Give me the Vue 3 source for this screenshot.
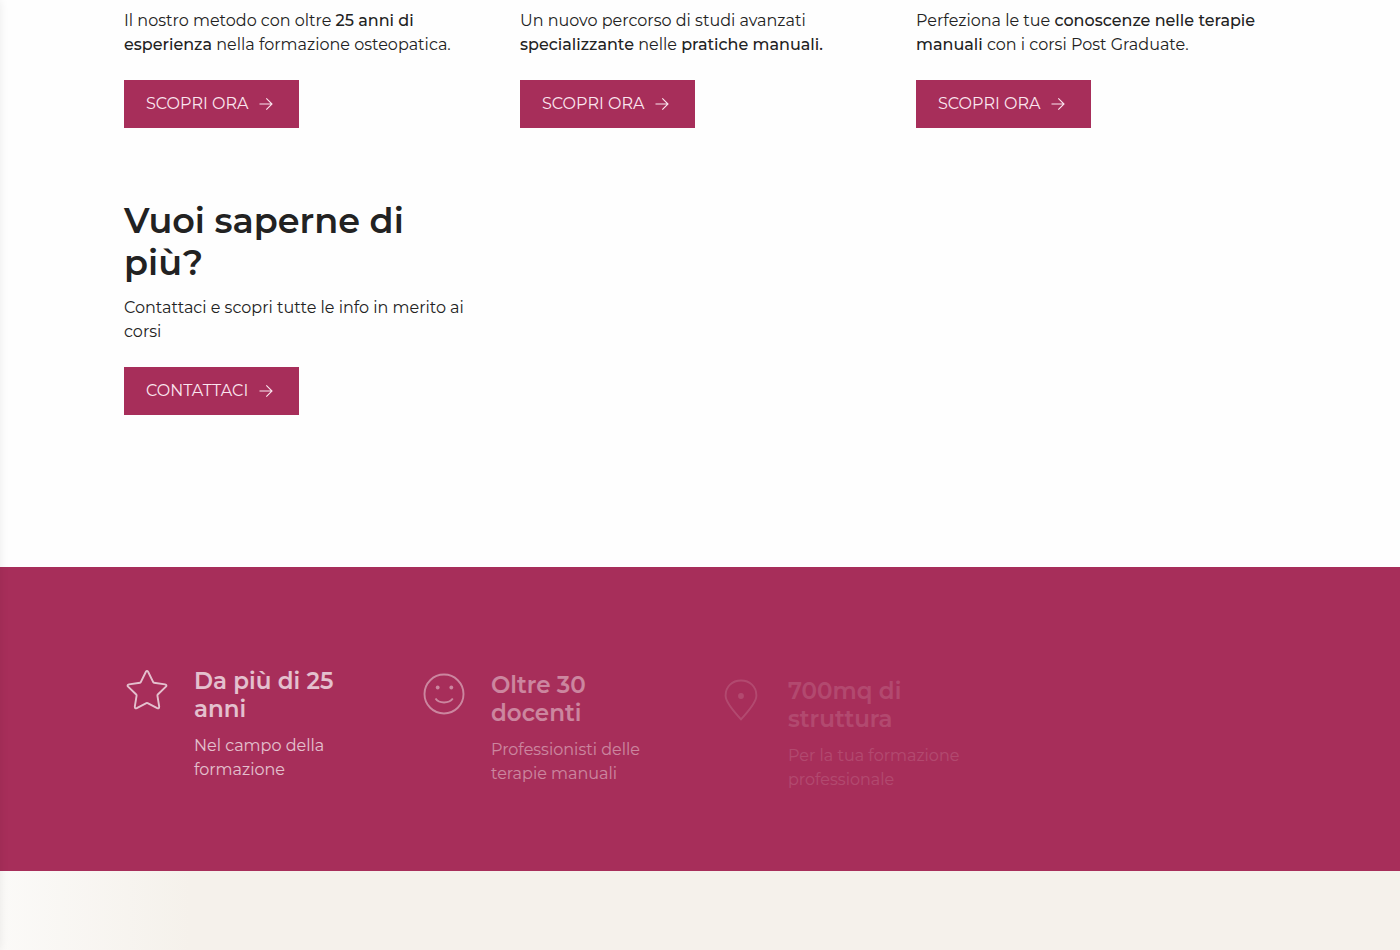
<script setup>
const courses = [
  { parts: [{ t: 'Il nostro metodo con oltre ' }, { t: '25 anni di', b: true, br: true }, { t: 'esperienza', b: true }, { t: ' nella formazione osteopatica.' }] },
  { parts: [{ t: 'Un nuovo percorso di studi avanzati', br: true }, { t: 'specializzante', b: true }, { t: ' nelle ' }, { t: 'pratiche manuali.', b: true }] },
  { parts: [{ t: 'Perfeziona le tue ' }, { t: 'conoscenze nelle terapie', b: true, br: true }, { t: 'manuali', b: true }, { t: ' con i corsi Post Graduate.' }] }
]

const features = [
  { icon: 'star', title: ['Da più di 25', 'anni'], text: ['Nel campo della', 'formazione'], opacity: 0.7, rise: 0 },
  { icon: 'smile', title: ['Oltre 30', 'docenti'], text: ['Professionisti delle', 'terapie manuali'], opacity: 0.42, rise: 4 },
  { icon: 'pin', title: ['700mq di', 'struttura'], text: ['Per la tua formazione', 'professionale'], opacity: 0.13, rise: 10 }
]
</script>

<template>
  <main class="page">
    <section class="courses">
      <div class="container course-grid">
        <article v-for="(course, i) in courses" :key="i" class="course">
          <p>
            <template v-for="(part, j) in course.parts" :key="j"><strong v-if="part.b">{{ part.t }}</strong><span v-else>{{ part.t }}</span><br v-if="part.br"></template>
          </p>
          <a class="button" href="#">
            SCOPRI ORA
            <svg class="arrow" viewBox="0 0 14 14" aria-hidden="true"><path d="M.5 7h12.4M7.3 1.3 13 7l-5.7 5.7" /></svg>
          </a>
        </article>
        <article class="course contact">
          <h2>Vuoi saperne di<br>più?</h2>
          <p>Contattaci e scopri tutte le info in merito ai<br>corsi</p>
          <a class="button" href="#">
            CONTATTACI
            <svg class="arrow" viewBox="0 0 14 14" aria-hidden="true"><path d="M.5 7h12.4M7.3 1.3 13 7l-5.7 5.7" /></svg>
          </a>
        </article>
      </div>
    </section>

    <section class="band">
      <div class="container feature-grid">
        <article
          v-for="f in features"
          :key="f.icon"
          class="feature"
          :style="{ opacity: f.opacity, transform: `translateY(${f.rise}px)` }"
        >
          <svg class="icon" viewBox="0 0 46 46" aria-hidden="true">
            <path v-if="f.icon === 'star'" d="M21.9 4.8Q23 2.9 24.1 4.8L29.2 15.2Q29.4 15.7 30 15.8L41 17.4Q43.4 18 41.9 19.6L33.8 27.5Q33.3 28 33.4 28.6L35.2 39.6Q35.2 42 33.2 41.2L23.6 36.2Q23 35.9 22.4 36.2L12.8 41.2Q10.8 42 10.8 39.6L12.6 28.6Q12.7 28 12.2 27.5L4.1 19.6Q2.6 18 5 17.4L16 15.8Q16.6 15.7 16.8 15.2Z" />
            <template v-else-if="f.icon === 'smile'">
              <circle cx="23" cy="23" r="19.5" />
              <path d="M14.5 27.5C18 32.8 28 32.8 31.8 27.5" />
              <circle class="dot" cx="16.7" cy="16.5" r="1.9" />
              <circle class="dot" cx="30.3" cy="16.5" r="1.9" />
            </template>
            <template v-else>
              <path d="M23 42.3C18 36.5 7.6 26.5 7.6 18.5C7.6 9.5 14.2 3.5 23 3.5S38.4 9.5 38.4 18.5C38.4 26.5 28 36.5 23 42.3Z" />
              <circle class="dot" cx="23" cy="19" r="2.9" />
            </template>
          </svg>
          <div>
            <h3>{{ f.title[0] }}<br>{{ f.title[1] }}</h3>
            <p>{{ f.text[0] }}<br>{{ f.text[1] }}</p>
          </div>
        </article>
      </div>
    </section>

    <section class="sand"></section>
  </main>
</template>

<style>
body {
  background: #fefefe;
}
</style>

<style scoped>
.page {
  position: relative;
  display: flex;
  flex-direction: column;
  min-height: 100vh;
  overflow: hidden;
  color: #222;
  font: 400 16px/24px Montserrat, Inter, "Liberation Sans", sans-serif;
}
.page::before {
  content: "";
  position: absolute;
  z-index: 1;
  inset: 0 100% 0 auto;
  width: 20px;
  box-shadow: 0 0 10px rgba(0, 0, 0, 0.08);
}
.container {
  display: grid;
  width: calc(100% - 48px);
  max-width: 1152px;
  margin: 0 auto;
}
.courses {
  padding: 9px 0 152px;
}
.course-grid {
  grid-template-columns: repeat(3, minmax(0, 1fr));
  gap: 72px 36px;
}
.course {
  display: flex;
  flex-direction: column;
  align-items: flex-start;
}
p, h2, h3 {
  margin: 0;
}
p {
  white-space: nowrap;
}
strong {
  font-weight: 500;
}
h2 {
  margin-bottom: 12px;
  font-size: 35px;
  line-height: 42px;
  font-weight: 600;
  white-space: nowrap;
}
.button {
  display: flex;
  align-items: center;
  gap: 11px;
  height: 48px;
  margin-top: 23px;
  padding: 0 26px 0 22px;
  background: #a72e5a;
  color: #fbe6ef;
  text-decoration: none;
}
.arrow {
  width: 14px;
  height: 14px;
  fill: none;
  stroke: currentColor;
  stroke-width: 1.1;
}
.band {
  padding: 100px 0 89px;
  background: #a72e5a;
  color: #fff;
}
.feature-grid {
  grid-template-columns: repeat(4, minmax(0, 1fr));
  gap: 36px;
}
.feature {
  display: flex;
  align-items: flex-start;
  gap: 24px;
}
.icon {
  flex: none;
  width: 46px;
  height: 46px;
  fill: none;
  stroke: currentColor;
  stroke-width: 1.9;
}
.dot {
  fill: currentColor;
  stroke: none;
}
h3 {
  margin-bottom: 11px;
  font-size: 23px;
  line-height: 28px;
  font-weight: 600;
}
.sand {
  flex: 1;
  min-height: 79px;
  background: linear-gradient(90deg, #fbfaf8, #f5f1eb 190px);
}
</style>
